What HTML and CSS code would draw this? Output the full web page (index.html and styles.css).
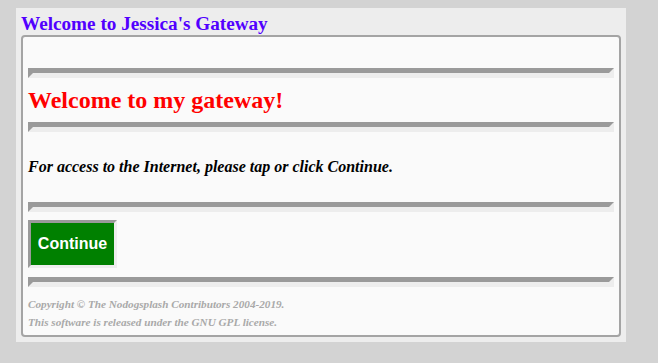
FILE: index.html
```html
<!DOCTYPE html>
<html lang="en">

<head>
    <meta charset="UTF-8">
    <meta name="viewport" content="width=device-width, initial-scale=1.0">
    <title>Jessica's Gateway</title>
    <link rel="stylesheet" href="styles.css">
</head>

<body>
    <div class="offset">
        <div class="gateway-name">Welcome to Jessica's Gateway</div>
        <div class="insert">
            <div class="spacer"></div>
            <hr>
            <div class="big-red">Welcome to my gateway!</div>
            <hr>
            <p class="notice">For access to the Internet, please tap or click Continue.</p>
            <hr>
            <form class="login" onsubmit="return false;">
                <button type="submit" class="continue">Continue</button>
            </form>
            <hr>
            <div class="copy-right">
                Copyright © The Nodogsplash Contributors 2004-2019.<br>
                This software is released under the GNU GPL license.
            </div>
        </div>
    </div>
</body>

</html>
```

FILE: styles.css
```css
body {
    background-color: #d3d3d3;
    color: black;
    font-family: "Liberation Serif", "Times New Roman", serif;
    font-size: 16px;
    margin: 8px 0 0 16px;
}

.offset {
    background-color: #ededed;
    width: 600px;
    padding: 5px;
}

.gateway-name {
    font-size: 1.2em;
    line-height: 22px;
    font-weight: bold;
    color: #5200ff;
}

.insert {
    background-color: #fafafa;
    border: 2px solid #a4a4a4;
    border-radius: 4px;
    padding: 5px 5px 4px;
}

.spacer {
    height: 18px;
}

hr {
    display: block;
    height: 0;
    margin: 8px 0;
    border-style: solid;
    border-width: 5px;
    border-color: #9a9a9a #ededed #ededed #9a9a9a;
}

.big-red {
    font-size: 1.5em;
    line-height: 28px;
    font-weight: bold;
    color: #ff0000;
}

/* margins collapse with the hr margins, so these are the full gaps */
.notice {
    margin: 26px 0;
    line-height: 18px;
    font-weight: bold;
    font-style: italic;
}

.login {
    margin: 0;
    padding-bottom: 1px;
}

.continue {
    display: block;
    width: 89px;
    height: 48px;
    padding: 0;
    background-color: #008000;
    color: white;
    font-family: "Liberation Sans", Arial, sans-serif;
    font-size: 16px;
    font-weight: bold;
    border-style: solid;
    border-width: 3px;
    border-color: #9a9a9a #ededed #ededed #9a9a9a;
    cursor: pointer;
}

.copy-right {
    line-height: 18px;
    font-size: 0.7em;
    font-weight: bold;
    font-style: italic;
    color: #a9a9a9;
}
```
